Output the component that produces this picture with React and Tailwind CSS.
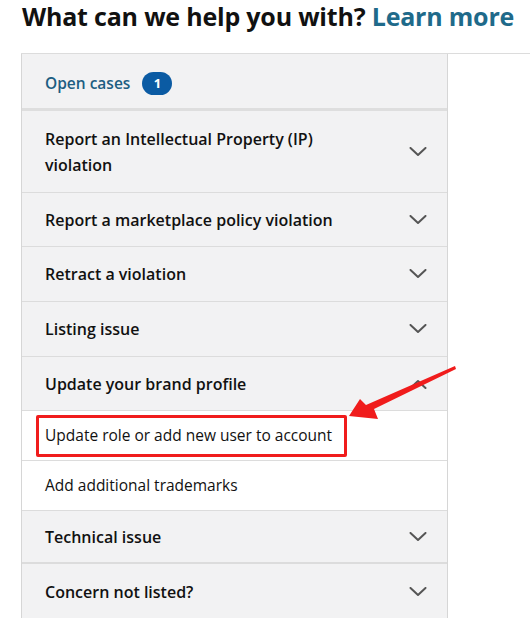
import React from "react";

const Chevron = ({ up }) => (
  <svg width="18" height="10" viewBox="0 0 18 10" className="shrink-0">
    <path
      d={up ? "M1.5 9 L9 2 L16.5 9" : "M1.5 1 L9 8 L16.5 1"}
      fill="none"
      stroke="#555"
      strokeWidth="2"
      strokeLinecap="round"
      strokeLinejoin="round"
    />
  </svg>
);

const topics = [
  { title: "Report an Intellectual Property (IP) violation", h: "h-[82px]" },
  { title: "Report a marketplace policy violation", h: "h-[54px]" },
  { title: "Retract a violation", h: "h-[55px]" },
  { title: "Listing issue", h: "h-[55px]" },
];

const App = () => {
  return (
    <div className="relative w-[530px] h-[618px] overflow-hidden bg-white font-['Open_Sans',sans-serif] text-[#111]">
      <h1 className="pl-[22px] pt-[1px] text-[25px] leading-[30px] font-bold tracking-[-0.2px]">
        What can we help you with? <span className="text-[#1f6a8a]">Learn more</span>
      </h1>

      {/* cases panel */}
      <div className="mt-[22px] ml-[21px] flex border-t border-[#dcdcdc]">
        <div className="w-[427px] border-x border-[#d6d6d6] bg-[#f2f2f3]">
          <div className="h-[57px] flex items-center gap-[12px] pl-[23px] pt-[5px] border-b-[3px] border-[#dedede]">
            <span className="text-[15.5px] font-semibold text-[#1d5e82]">Open cases</span>
            <span className="w-[30px] h-[23px] rounded-full bg-[#0b5ba3] text-white text-[13px] font-bold flex items-center justify-center">
              1
            </span>
          </div>

          {topics.map((t) => (
            <div
              key={t.title}
              className={`${t.h} flex items-center justify-between pl-[23px] pr-[20px] border-b border-[#dcdcdc]`}
            >
              <span className="w-[320px] text-[16px] leading-[26px] font-semibold">{t.title}</span>
              <Chevron />
            </div>
          ))}

          <div className="h-[54px] flex items-center justify-between pl-[23px] pr-[20px] border-b border-[#dcdcdc]">
            <span className="text-[16px] font-semibold">Update your brand profile</span>
            <Chevron up />
          </div>

          <div className="bg-white">
            <div className="h-[50px] flex items-center pl-[14px] border-b border-[#dcdcdc]">
              <div className="w-[311px] h-[42px] flex items-center pl-[6px] border-[3px] border-[#f01c1c] rounded-[2px]">
                <span className="text-[15.5px]">Update role or add new user to account</span>
              </div>
            </div>
            <div className="h-[50px] flex items-center pl-[23px] border-b border-[#dcdcdc]">
              <span className="text-[15.5px]">Add additional trademarks</span>
            </div>
          </div>

          <div className="h-[53px] flex items-center justify-between pl-[23px] pr-[20px] border-b-2 border-[#dcdcdc]">
            <span className="text-[16px] font-semibold">Technical issue</span>
            <Chevron />
          </div>
          <div className="h-[56px] flex items-center justify-between pl-[23px] pr-[20px] border-b border-[#dcdcdc]">
            <span className="text-[16px] font-semibold">Concern not listed?</span>
            <Chevron />
          </div>
        </div>
      </div>

      {/* red annotation arrow */}
      <svg className="absolute left-0 top-0 pointer-events-none" width="530" height="618">
        <polygon points="455,366 456,369 374,409 378,419 349,416 360,399 366,405" fill="#f01c1c" />
      </svg>
    </div>
  );
};

export default App;
